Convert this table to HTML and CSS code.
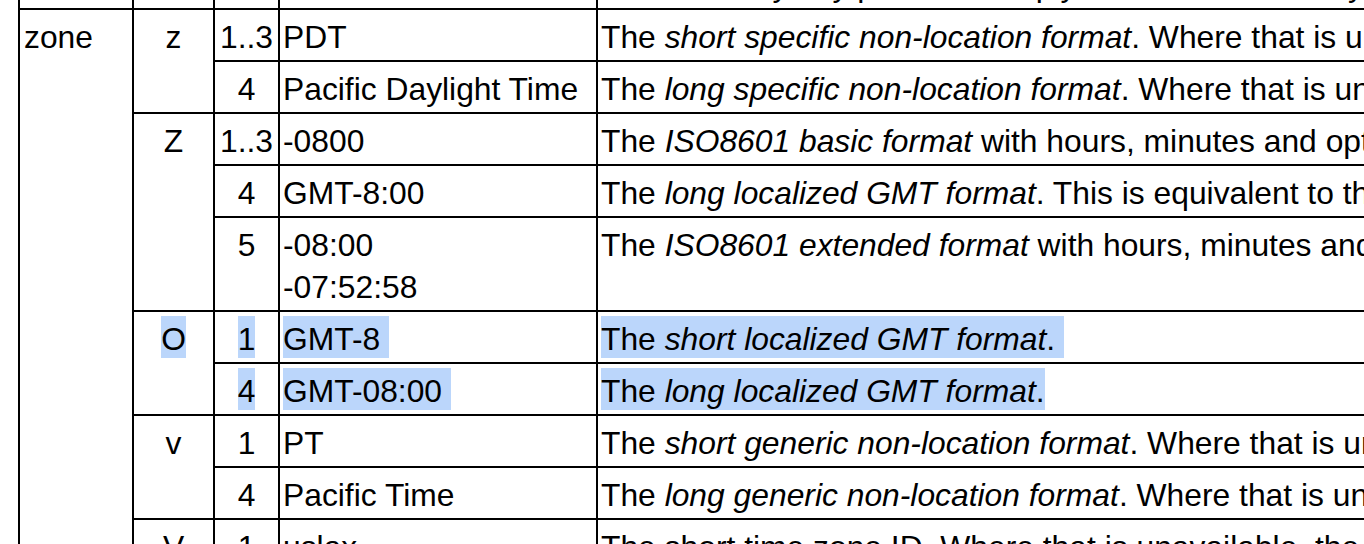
FILE: index.html
```html
<!DOCTYPE html>
<html lang="en">
<head>
<meta charset="utf-8">
<title>Date Field Symbol Table</title>
<link rel="stylesheet" href="styles.css">
</head>
<body>
<div class="viewport">
<table class="fields">
  <colgroup>
    <col class="c-field">
    <col class="c-sym">
    <col class="c-count">
    <col class="c-example">
    <col class="c-desc">
  </colgroup>
  <tbody>
    <tr class="prev">
      <td></td>
      <td></td>
      <td></td>
      <td></td>
      <td class="desc">value, so any day period is simply the offset of the day.</td>
    </tr>
    <tr>
      <td class="field" rowspan="10">zone</td>
      <td class="sym" rowspan="2">z</td>
      <td class="count">1..3</td>
      <td class="example">PDT</td>
      <td class="desc">The <i>short specific non-location format</i>. Where that is unavailable, falls back to the <i>short localized GMT format</i> ("O").</td>
    </tr>
    <tr>
      <td class="count">4</td>
      <td class="example">Pacific Daylight Time</td>
      <td class="desc">The <i>long specific non-location format</i>. Where that is unavailable, falls back to the <i>long localized GMT format</i> ("OOOO").</td>
    </tr>
    <tr>
      <td class="sym" rowspan="3">Z</td>
      <td class="count">1..3</td>
      <td class="example">-0800</td>
      <td class="desc">The <i>ISO8601 basic format</i> with hours, minutes and optional seconds fields. The format is equivalent to RFC 822 zone format.</td>
    </tr>
    <tr>
      <td class="count">4</td>
      <td class="example">GMT-8:00</td>
      <td class="desc">The <i>long localized GMT format</i>. This is equivalent to the "OOOO" specifier.</td>
    </tr>
    <tr>
      <td class="count">5</td>
      <td class="example">-08:00<br>-07:52:58</td>
      <td class="desc">The <i>ISO8601 extended format</i> with hours, minutes and optional seconds fields. The ISO8601 UTC indicator "Z" is used.</td>
    </tr>
    <tr>
      <td class="sym" rowspan="2"><span class="sel">O</span></td>
      <td class="count"><span class="sel">1</span></td>
      <td class="example"><span class="sel">GMT-8 </span></td>
      <td class="desc"><span class="sel">The <i>short localized GMT format</i>. </span></td>
    </tr>
    <tr>
      <td class="count"><span class="sel">4</span></td>
      <td class="example"><span class="sel">GMT-08:00 </span></td>
      <td class="desc"><span class="sel">The <i>long localized GMT format</i>.</span></td>
    </tr>
    <tr>
      <td class="sym" rowspan="2">v</td>
      <td class="count">1</td>
      <td class="example">PT</td>
      <td class="desc">The <i>short generic non-location format</i>. Where that is unavailable, falls back to the <i>generic location format</i> ("VVVV").</td>
    </tr>
    <tr>
      <td class="count">4</td>
      <td class="example">Pacific Time</td>
      <td class="desc">The <i>long generic non-location format</i>. Where that is unavailable, falls back to <i>generic location format</i> ("VVVV").</td>
    </tr>
    <tr>
      <td class="sym">V</td>
      <td class="count">1</td>
      <td class="example">uslax</td>
      <td class="desc">The short time zone ID. Where that is unavailable, the special short time zone ID <i>unk</i> (Unknown Zone) is used.</td>
    </tr>
  </tbody>
</table>
</div>
</body>
</html>
```

FILE: styles.css
```css
html, body {
  margin: 0;
  padding: 0;
  background: #ffffff;
}

.viewport {
  width: 1364px;
  height: 544px;
  overflow: hidden;
}

.fields {
  border-collapse: collapse;
  table-layout: fixed;
  width: 1700px;
  margin: -44px 0 0 18px;
  font-family: "Liberation Sans", Arial, sans-serif;
  font-size: 31.8px;
  line-height: 42px;
  color: #000000;
}

.c-field { width: 114px; }
.c-sym { width: 81px; }
.c-count { width: 65px; }
.c-example { width: 318px; }
.c-desc { width: 1122px; }

.fields td {
  border: 2px solid #000000;
  padding: 6px 4px 2px;
  vertical-align: top;
  white-space: nowrap;
  overflow: hidden;
}

.fields .field {
  text-align: left;
}

.fields .sym,
.fields .count {
  text-align: center;
  padding-left: 1px;
  padding-right: 1px;
}

.fields .example,
.fields .desc {
  text-align: left;
  padding-left: 3px;
}

.sel {
  display: inline-block;
  white-space: pre;
  background: linear-gradient(#bbd6fb, #bbd6fb) top left / 100% 40px no-repeat;
  box-shadow: 0 -2px 0 #bbd6fb;
}
```
